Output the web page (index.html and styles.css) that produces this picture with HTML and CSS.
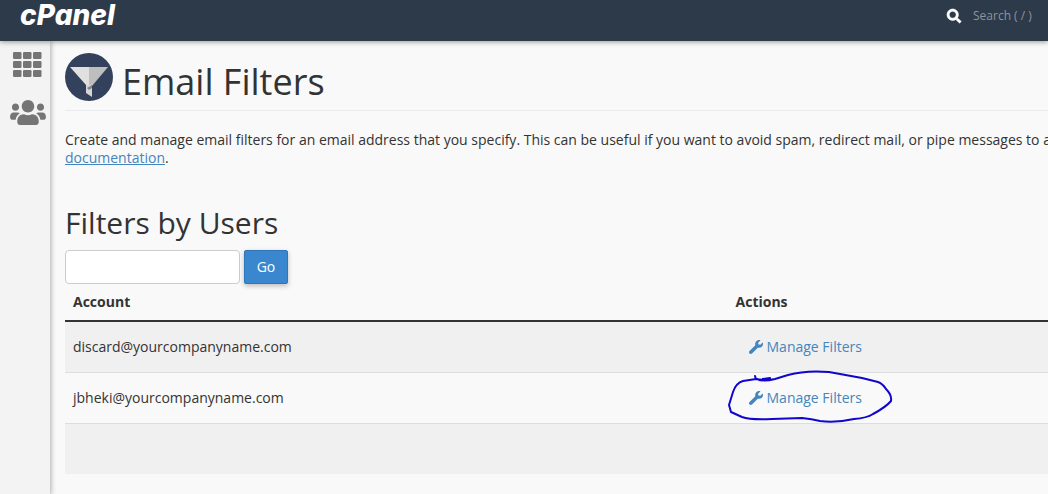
FILE: index.html
```html
<!DOCTYPE html>
<html lang="en">
<head>
<meta charset="utf-8">
<title>cPanel - Email Filters</title>
<link rel="stylesheet" href="styles.css">
</head>
<body>
<svg class="symbols" aria-hidden="true">
  <symbol id="wrench" viewBox="0 0 512 512"><path d="M507.700 109.100c-2.200-9-13.500-12.100-20.100-5.500l-74.400 74.400-67.900-11.300-11.300-67.900 74.400-74.400c6.600-6.600 3.400-17.900-5.700-20.200-47.400-11.700-99.600.9-136.600 37.900-39.600 39.600-50.500 97.100-34.100 147.200L18.700 402.800c-25 25-25 65.500 0 90.500s65.500 25 90.500 0l213.200-213.200c50.100 16.700 107.500 5.700 147.400-34.200 37.100-37.100 49.700-89.300 37.900-136.800z"/></symbol>
</svg>
<header class="topbar">
  <a class="logo" href="#">cPanel</a>
  <label class="search">
    <svg viewBox="0 0 512 512" aria-hidden="true"><path stroke="#fff" stroke-width="24" d="M505 442.700 405.300 343c-4.500-4.500-10.600-7-17-7H372c27.600-35.300 44-79.700 44-128C416 93.100 322.900 0 208 0S0 93.100 0 208s93.100 208 208 208c48.300 0 92.700-16.400 128-44v16.300c0 6.400 2.500 12.500 7 17l99.700 99.700c9.400 9.400 24.600 9.400 33.900 0l28.300-28.300c9.400-9.400 9.400-24.600.1-34zM208 336c-70.700 0-128-57.200-128-128 0-70.700 57.200-128 128-128 70.700 0 128 57.200 128 128 0 70.700-57.200 128-128 128z"/></svg>
    <input type="text" placeholder="Search ( / )" aria-label="Search">
  </label>
</header>
<div class="shell">
  <nav class="sidebar">
    <a href="#" aria-label="Tools">
      <svg class="grid-icon" viewBox="0 0 29 25"><g><rect width="8.500" height="7" rx="1.200"/><rect x="10" width="8.500" height="7" rx="1.200"/><rect x="20" width="8.500" height="7" rx="1.200"/><rect y="9" width="8.500" height="7" rx="1.200"/><rect x="10" y="9" width="8.500" height="7" rx="1.200"/><rect x="20" y="9" width="8.500" height="7" rx="1.200"/><rect y="18" width="8.500" height="7" rx="1.200"/><rect x="10" y="18" width="8.500" height="7" rx="1.200"/><rect x="20" y="18" width="8.500" height="7" rx="1.200"/></g></svg>
    </a>
    <a href="#" aria-label="User manager">
      <svg class="users-icon" viewBox="0 32 640 448"><path d="M96 224c35.300 0 64-28.700 64-64s-28.700-64-64-64-64 28.700-64 64 28.700 64 64 64zm448 0c35.300 0 64-28.700 64-64s-28.700-64-64-64-64 28.700-64 64 28.700 64 64 64zm32 32h-64c-17.600 0-33.500 7.100-45.100 18.600 40.300 22.100 68.900 62 75.100 109.400h66c17.700 0 32-14.300 32-32v-32c0-35.300-28.700-64-64-64zm-256 0c61.900 0 112-50.100 112-112S381.900 32 320 32 208 82.100 208 144s50.100 112 112 112zm76.800 32h-8.300c-20.800 10-43.900 16-68.500 16s-47.600-6-68.500-16h-8.300C179.600 288 128 339.600 128 403.200V432c0 26.500 21.500 48 48 48h288c26.500 0 48-21.500 48-48v-28.800c0-63.600-51.600-115.200-115.200-115.200zm-223.700-13.400C161.500 263.100 145.600 256 128 256H64c-35.300 0-64 28.700-64 64v32c0 17.700 14.300 32 32 32h65.900c6.300-47.400 34.900-87.300 75.200-109.400z"/></svg>
    </a>
  </nav>
  <main class="content">
    <h1 class="page-title">
      <svg viewBox="0 0 48 48" aria-hidden="true"><circle cx="24" cy="24" r="24" fill="#33415c"/><path d="M5 14h19v22l-3-4z" fill="#e0e0e0"/><path d="M24 14h19L27 33l-3 3z" fill="#bebebe"/><path d="M21 32h6v12l-6-4z" fill="#d6d6d6"/><path d="m22 35 5-3v3l-3 2z" fill="#858585"/></svg>
      <span>Email Filters</span>
    </h1>
    <p class="intro">Create and manage email filters for an email address that you specify. This can be useful if you want to avoid spam, redirect mail, or pipe messages to a<br><a href="#">documentation</a>.</p>
    <h2 class="section-title">Filters by Users</h2>
    <form class="filter-form">
      <input type="text" aria-label="Search accounts">
      <button type="button">Go</button>
    </form>
    <table class="accounts">
      <thead><tr><th class="account" scope="col">Account</th><th scope="col">Actions</th></tr></thead>
      <tbody>
        <tr><td>discard@yourcompanyname.com</td><td><a class="manage" href="#"><svg aria-hidden="true"><use href="#wrench"/></svg>Manage Filters</a></td></tr>
        <tr><td>jbheki@yourcompanyname.com</td><td><a class="manage" href="#"><svg aria-hidden="true"><use href="#wrench"/></svg>Manage Filters<svg class="pen-circle" viewBox="0 0 166 56" aria-hidden="true"><path d="M35 10 42 9 36 11 28 10 27 7 28 10 15 12Q8 14 5 23L1 36 3 43 14 48Q22 51 44 50L74 49Q84 50 92 52 108 54 126 50 139 49 145 45 158 38 163 32 164 26 158 20 155 15 150 13L134 9 101 3Q78 1 60 6L47 10 Q35 13 29 10"/></svg></a></td></tr>
        <tr><td></td><td></td></tr>
      </tbody>
    </table>
  </main>
</div>
</body>
</html>
```
FILE: styles.css
```css
* { box-sizing: border-box; }
body {
  margin: 0;
  min-height: 100vh;
  display: flex;
  flex-direction: column;
  background: #f9f9f9;
  color: #333;
  font: 14px/18px "Open Sans", "Noto Sans", sans-serif;
  overflow-x: hidden;
}
a { color: #4585bd; }
.symbols { position: absolute; width: 0; height: 0; }
.topbar {
  position: relative;
  display: flex;
  justify-content: space-between;
  height: 41px;
  padding: 0 0 0 20px;
  background: #2c3a4a;
  box-shadow: 0 1px 5px rgba(0, 0, 0, .4);
}
.logo {
  color: #fff;
  font: italic 800 28px/30px Inter, sans-serif;
  text-decoration: none;
}
.search { display: flex; align-items: center; gap: 12px; height: 31px; }
.search svg { width: 14px; height: 14px; fill: #fff; overflow: visible; }
.search input {
  width: 75px;
  padding: 0;
  border: 0;
  background: none;
  color: #fff;
  font: 12px/18px "Open Sans", sans-serif;
}
.search input::placeholder { color: #8d949c; opacity: 1; }
.shell { flex: 1; display: flex; }
.sidebar {
  flex: none;
  display: flex;
  flex-direction: column;
  align-items: center;
  gap: 23px;
  width: 50px;
  padding: 11px 0 0 5px;
  background: #f3f3f3;
  box-shadow: 1px 0 5px rgba(0, 0, 0, .3);
}
.sidebar svg { display: block; fill: #757575; }
.grid-icon { width: 29px; height: 25px; }
.users-icon { width: 36px; height: 25px; }
.content { flex: 1; min-width: 0; padding: 12px 0 20px 15px; }
.page-title {
  display: flex;
  gap: 9px;
  height: 58px;
  margin: 0 0 20px;
  border-bottom: 1px solid #eaeaee;
  font-size: 36px;
  font-weight: 400;
  line-height: 58px;
}
.page-title svg { width: 48px; height: 48px; }
.intro { margin: 0 0 36px; white-space: nowrap; }
.section-title { margin: 0 0 7px; font-size: 30px; font-weight: 400; line-height: 40px; }
.filter-form { display: flex; gap: 4px; }
.filter-form input {
  width: 175px;
  height: 34px;
  padding: 6px 12px;
  border: 1px solid #ccc;
  border-radius: 4px;
  background: #fff;
  font: inherit;
}
.filter-form button {
  width: 44px;
  height: 34px;
  padding: 0;
  border: 1px solid #2f76b8;
  border-radius: 2px;
  background: #3a87d0;
  box-shadow: 0 2px 5px rgba(0, 0, 0, .25);
  color: #fff;
  font: inherit;
}
.accounts { width: 100%; border-collapse: collapse; table-layout: fixed; }
.accounts .account { width: 67.4%; }
.accounts th {
  height: 37px;
  padding: 0 8px;
  border-bottom: 2px solid #333;
  text-align: left;
  font-weight: 700;
}
.accounts td { height: 51px; padding: 0 8px; border-bottom: 1px solid #ddd; }
.accounts tbody tr:nth-child(odd) { background: #f0f0f0; }
.accounts tr:last-child td { border-bottom-color: #f9f9f9; }
.manage {
  position: relative;
  display: inline-flex;
  align-items: center;
  gap: 4px;
  padding-left: 13px;
  text-decoration: none;
  vertical-align: middle;
}
.manage svg { width: 14px; height: 14px; fill: currentColor; }
.manage .pen-circle {
  position: absolute;
  left: -8px;
  top: -20px;
  width: 166px;
  height: 56px;
  fill: none;
  stroke: #1206cc;
  stroke-width: 2;
  stroke-linecap: round;
  stroke-linejoin: round;
  pointer-events: none;
}
```
